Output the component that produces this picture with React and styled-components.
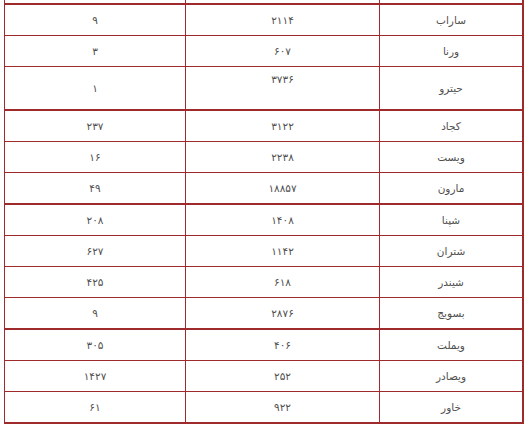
import React from 'react'
import styled, { createGlobalStyle } from 'styled-components'

const GlobalStyle = createGlobalStyle`
  html, body {
    margin: 0;
    padding: 0;
    background: #ffffff;
  }
`

const lineColor = '#9e2a2b'

const Page = styled.div`
  padding: 0 2px 0 4px;
  font-family: "DejaVu Sans", "Noto Sans", sans-serif;
  font-size: 10.5px;
  color: #4f4f4f;
  direction: rtl;
`

const Table = styled.div`
  border-right: 2px solid ${lineColor};
  border-left: 1px solid ${lineColor};
`

const Row = styled.div`
  display: grid;
  grid-template-columns: 143px 194px 1fr;
  height: ${(p) => p.$height}px;
  border-bottom: ${(p) => (p.$groupEnd ? 2 : 1)}px solid ${lineColor};
`

const Cell = styled.div`
  display: flex;
  justify-content: center;
  align-items: ${(p) => (p.$top ? 'flex-start' : 'center')};
  padding-top: ${(p) => (p.$top ? 6 : 0)}px;
  &:not(:last-child) {
    border-left: 1px solid ${lineColor};
  }
`

const groups = [
  [
    ['ساراب', '۲۱۱۴', '۹'],
    ['ورنا', '۶۰۷', '۳'],
    ['حیترو', '۳۷۳۶', '۱', true],
  ],
  [
    ['کجاد', '۳۱۲۲', '۲۳۷'],
    ['ویست', '۲۲۳۸', '۱۶'],
    ['مارون', '۱۸۸۵۷', '۴۹'],
  ],
  [
    ['شپنا', '۱۴۰۸', '۲۰۸'],
    ['شتران', '۱۱۴۲', '۶۲۷'],
    ['شیندر', '۶۱۸', '۴۲۵'],
    ['بسویج', '۲۸۷۶', '۹'],
  ],
  [
    ['ویملت', '۴۰۶', '۳۰۵'],
    ['ویصادر', '۲۵۲', '۱۴۲۷'],
    ['خاور', '۹۲۲', '۶۱'],
  ],
]

export default function App() {
  return (
    <>
      <GlobalStyle />
      <Page>
        <Table>
          {/* tail of the row above, cut off by the scroll */}
          <Row $height={3} $groupEnd>
            <Cell />
            <Cell />
            <Cell />
          </Row>
          {groups.map((group, gi) =>
            group.map(([name, total, count, tall], ri) => (
              <Row
                key={`${gi}-${ri}`}
                $height={tall ? 42 : 30}
                $groupEnd={ri === group.length - 1}
              >
                <Cell>{name}</Cell>
                <Cell $top={tall}>{total}</Cell>
                <Cell>{count}</Cell>
              </Row>
            ))
          )}
        </Table>
      </Page>
    </>
  )
}
